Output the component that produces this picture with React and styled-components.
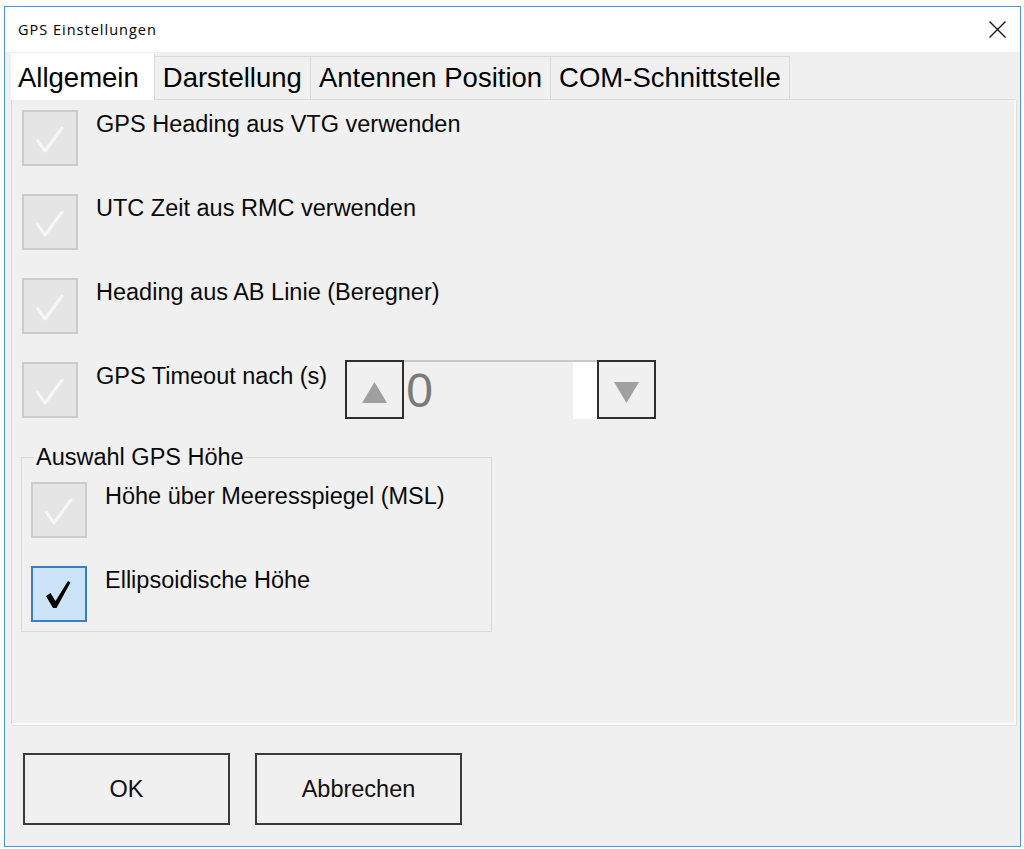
import React from "react";
import styled, { createGlobalStyle } from "styled-components";

const GlobalStyle = createGlobalStyle`
  html, body {
    margin: 0;
    padding: 0;
    background: #fff;
  }
  body {
    font-family: "Liberation Sans", Arial, sans-serif;
  }
`;

const Window = styled.div`
  box-sizing: border-box;
  margin: 6px 0 0 4px;
  width: 1017px;
  height: 841px;
  border: 1px solid #4a95dd;
  display: flex;
  flex-direction: column;
  background: #f0f0f0;
`;

const TitleBar = styled.div`
  flex: none;
  height: 45px;
  background: #fff;
  display: flex;
  align-items: center;
  justify-content: space-between;
  padding: 0 14px 0 13px;
  font-family: "Open Sans", "Noto Sans", sans-serif;
  font-size: 14.5px;
  letter-spacing: 1px;
  color: #000;
`;

const CloseButton = styled.span`
  display: flex;
  width: 17px;
  height: 17px;
`;

const Body = styled.div`
  flex: 1;
  display: flex;
  flex-direction: column;
  padding: 1px 4px 0 6px;
`;

const TabStrip = styled.div`
  display: flex;
  align-items: flex-end;
  height: 46px;
`;

const Tab = styled.div`
  box-sizing: border-box;
  position: relative;
  z-index: ${(p) => (p.$active ? 1 : 0)};
  height: ${(p) => (p.$active ? 47 : 43)}px;
  margin-bottom: ${(p) => (p.$active ? -1 : 0)}px;
  padding: ${(p) => (p.$active ? "8px 15px 0 7px" : "5px 8px 0 8px")};
  background: ${(p) => (p.$active ? "#fff" : "#f0f0f0")};
  border-top: 1px solid ${(p) => (p.$active ? "#fff" : "#d9d9d9")};
  border-right: 1px solid #d9d9d9;
  font-size: 27.5px;
  line-height: normal;
  color: #000;
  white-space: nowrap;
`;

const TabPanel = styled.div`
  box-sizing: border-box;
  height: 626px;
  border-top: 1px solid #d9d9d9;
  border-left: 1px solid #d9d9d9;
  border-right: 2px solid #fcfcfc;
  border-bottom: 2px solid #fcfcfc;
  box-shadow: 1px 1px 0 #dedede;
  padding: 10px 0 0 10px;
  display: flex;
  flex-direction: column;
  align-items: flex-start;
  gap: 28px;
`;

const Row = styled.div`
  display: flex;
  align-items: flex-start;
`;

const Box = styled.span`
  box-sizing: border-box;
  flex: none;
  width: 56px;
  height: 56px;
  border: 2px solid ${(p) => (p.$checked ? "#3c7fc0" : "#cccccc")};
  background: ${(p) => (p.$checked ? "#cce4f7" : "#e5e5e5")};
  display: flex;
`;

const Label = styled.span`
  margin: 1px 0 0 18px;
  font-size: 23.5px;
  line-height: 27px;
  color: #0a0a0a;
  white-space: nowrap;
`;

const Spinner = styled.div`
  display: flex;
  height: 59px;
  margin: -2px 0 0 18px;
`;

const SpinButton = styled.div`
  box-sizing: border-box;
  width: 59px;
  height: 59px;
  border: 2px solid #2e2e2e;
  display: flex;
  align-items: center;
  justify-content: center;
  padding-top: 6px;
`;

const SpinValue = styled.div`
  box-sizing: border-box;
  width: 193px;
  height: 59px;
  border-top: 2px solid #c9c9c9;
  background: linear-gradient(to left, #fff 24px, transparent 24px);
  padding: 5px 0 0 2px;
  font-size: 48px;
  line-height: 48px;
  color: #7a7a7a;
`;

const Group = styled.fieldset`
  box-sizing: border-box;
  width: 471px;
  min-width: 0;
  margin: -3px 0 0 -1px;
  padding: 11px 0 9px 9px;
  border: 1px solid #d9d9d9;
  display: flex;
  flex-direction: column;
  gap: 28px;
`;

const Legend = styled.legend`
  margin-left: 3px;
  padding: 0 2px;
  font-size: 23.5px;
  line-height: 27px;
  color: #0a0a0a;
`;

const Footer = styled.div`
  display: flex;
  gap: 25px;
  padding: 28px 0 0 12px;
`;

const Button = styled.button`
  box-sizing: border-box;
  width: 207px;
  height: 72px;
  padding: 0;
  border: 2px solid #3a3a3a;
  background: #f0f0f0;
  font-family: "Liberation Sans", Arial, sans-serif;
  font-size: 23.5px;
  color: #111;
`;

const CheckBox = ({ checked }) => (
  <Box $checked={checked}>
    <svg width="52" height="52" viewBox="2 2 52 52">
      {checked ? (
        <path d="M15 30 L19.5 27 L24.5 35 L37 15 L39.5 16.5 L25.5 42 L22 42 Z" fill="#000" />
      ) : (
        <path
          d="M15.5 30.5 L23 41 L40 18"
          fill="none"
          stroke="#f7f7f7"
          strokeWidth="3"
          strokeLinecap="round"
          strokeLinejoin="round"
        />
      )}
    </svg>
  </Box>
);

const Triangle = ({ down }) => (
  <svg width="25" height="21" viewBox="0 0 25 21">
    <path d={down ? "M0 0 H25 L12.5 21 Z" : "M12.5 0 L25 21 H0 Z"} fill="#a0a0a0" />
  </svg>
);

const options = [
  "GPS Heading aus VTG verwenden",
  "UTC Zeit aus RMC verwenden",
  "Heading aus AB Linie (Beregner)",
];

const tabs = ["Allgemein", "Darstellung", "Antennen Position", "COM-Schnittstelle"];

const App = () => {
  return (
    <>
      <GlobalStyle />
      <Window>
        <TitleBar>
          <span>GPS Einstellungen</span>
          <CloseButton>
            <svg width="17" height="17" viewBox="0 0 17 17">
              <path d="M0.5 0.5 L16.5 16.5 M16.5 0.5 L0.5 16.5" stroke="#111" strokeWidth="1.3" />
            </svg>
          </CloseButton>
        </TitleBar>
        <Body>
          <TabStrip>
            {tabs.map((t, i) => (
              <Tab key={t} $active={i === 0}>
                {t}
              </Tab>
            ))}
          </TabStrip>
          <TabPanel>
            {options.map((o) => (
              <Row key={o}>
                <CheckBox />
                <Label>{o}</Label>
              </Row>
            ))}
            <Row>
              <CheckBox />
              <Label>GPS Timeout nach (s)</Label>
              <Spinner>
                <SpinButton>
                  <Triangle />
                </SpinButton>
                <SpinValue>0</SpinValue>
                <SpinButton>
                  <Triangle down />
                </SpinButton>
              </Spinner>
            </Row>
            <Group>
              <Legend>Auswahl GPS Höhe</Legend>
              <Row>
                <CheckBox />
                <Label>Höhe über Meeresspiegel (MSL)</Label>
              </Row>
              <Row>
                <CheckBox checked />
                <Label>Ellipsoidische Höhe</Label>
              </Row>
            </Group>
          </TabPanel>
          <Footer>
            <Button>OK</Button>
            <Button>Abbrechen</Button>
          </Footer>
        </Body>
      </Window>
    </>
  );
};

export default App;
